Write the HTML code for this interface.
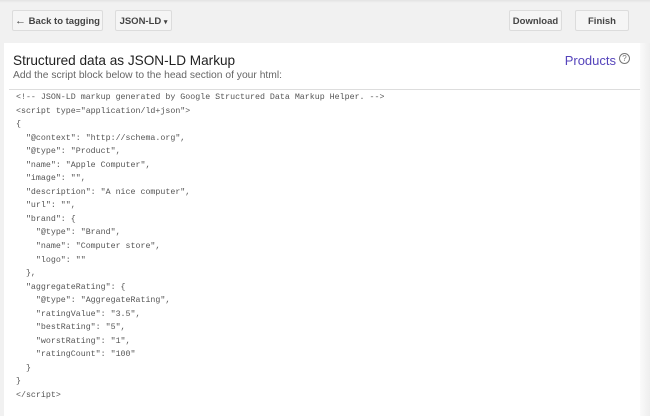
<!DOCTYPE html>
<html style="height:416px;overflow:hidden"><head><style>
body{margin:0;width:650px;height:416px;overflow:hidden;background:#f1f1f1;font-family:"Liberation Sans",sans-serif;position:relative}
.btn{position:absolute;top:10px;height:21px;border:1px solid #dcdcdc;background:#f5f5f5;border-radius:2px;font-size:9.5px;font-weight:bold;color:#444;line-height:21px;text-align:center;box-sizing:border-box}
.panel{position:absolute;left:4px;top:43px;width:636px;height:373px;background:#fff;overflow:hidden}
.edge{position:absolute;left:640px;top:43px;width:10px;height:373px;background:linear-gradient(to right,#fafafa,#eeeeee)}
h1{position:absolute;left:9px;top:10px;margin:0;font-weight:normal;font-size:13.6px;color:#222}
.sub{position:absolute;left:9px;top:27px;font-size:10.3px;color:#666}
.prod{position:absolute;right:10px;top:10px;font-size:13px;color:#5544bb}
.q{display:inline-block;width:9px;height:9px;border:1px solid #777;border-radius:50%;font-size:8px;line-height:9px;text-align:center;color:#777;vertical-align:top;margin-left:3px}
.line{position:absolute;left:5px;top:46px;width:631px;height:1px;background:#ddd}
pre{position:absolute;left:12px;top:48px;margin:0;font-family:"Liberation Mono",monospace;font-size:8.3px;line-height:13.55px;color:#555}
</style></head><body>
<div style="position:absolute;left:0;top:0;width:650px;height:3px;background:linear-gradient(#e2e2e2,#f1f1f1)"></div>
<div class="btn" style="left:12px;width:91px"><span style="font-size:11px">&#8592;</span> Back to tagging</div>
<div class="btn" style="left:115px;width:57px">JSON-LD <span style="font-size:7px">▾</span></div>
<div class="btn" style="left:509px;width:53px">Download</div>
<div class="btn" style="left:575px;width:54px">Finish</div>
<div class="panel">
<h1>Structured data as JSON-LD Markup</h1>
<div class="sub">Add the script block below to the head section of your html:</div>
<div class="prod">Products<span class="q">?</span></div>
<div class="line"></div>
<pre>&lt;!-- JSON-LD markup generated by Google Structured Data Markup Helper. --&gt;
&lt;script type="application/ld+json"&gt;
{
  "@context": "http://schema.org",
  "@type": "Product",
  "name": "Apple Computer",
  "image": "",
  "description": "A nice computer",
  "url": "",
  "brand": {
    "@type": "Brand",
    "name": "Computer store",
    "logo": ""
  },
  "aggregateRating": {
    "@type": "AggregateRating",
    "ratingValue": "3.5",
    "bestRating": "5",
    "worstRating": "1",
    "ratingCount": "100"
  }
}
&lt;/script&gt;</pre>
</div>
<div class="edge"></div>
</body></html>
